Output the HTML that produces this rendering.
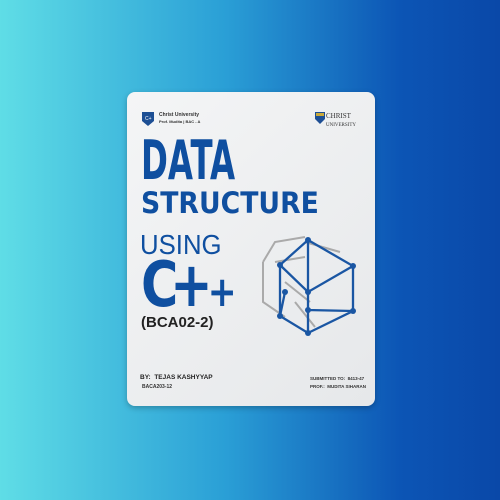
<!DOCTYPE html><html><head><style>
body{margin:0;width:500px;height:500px;overflow:hidden;background:linear-gradient(90deg,#5fdde6 0%,#2a9fd6 45%,#0c55b5 80%,#0a48a8 100%);font-family:"Liberation Sans",sans-serif;position:relative}
.card{position:absolute;left:127px;top:92px;width:248px;height:314px;background:linear-gradient(135deg,#f4f5f6,#e6e8ea);border-radius:8px;box-shadow:0 2px 6px rgba(0,0,0,.25)}
.t{position:absolute;color:#0f4fa0;font-weight:bold;white-space:nowrap}
</style></head><body>
<div class="card">
<svg style="position:absolute;left:15px;top:20px" width="12" height="14"><path d="M0 0H12V9L6 14L0 9Z" fill="#1d4f94"/><text x="3" y="8" font-size="5" fill="#fff">C+</text></svg>
<div class="t" style="left:32px;top:20px;font-size:5px;color:#333">Christ University</div>
<div class="t" style="left:32px;top:27px;font-size:4px;color:#333">Prof. Mudita | BAC - A</div>
<svg style="position:absolute;left:188px;top:20px" width="10" height="12"><path d="M0 0H10V7L5 12L0 7Z" fill="#1d4f94"/><rect x="1" y="1" width="8" height="3" fill="#c9a93a"/></svg>
<div class="t" style="left:199px;top:20px;font-size:7px;color:#333;font-family:'Liberation Serif',serif;font-weight:normal">CHRIST<br><span style="font-size:5px">UNIVERSITY</span></div>
<div class="t" style="left:14px;top:40px;font-size:54px;font-family:'DejaVu Sans',sans-serif;transform:scaleX(0.6);transform-origin:left;line-height:58px;height:58px">DATA</div>
<div class="t" style="left:14px;top:95px;font-size:29px;font-family:'DejaVu Sans',sans-serif;transform:scaleX(0.92);transform-origin:left;line-height:32px">STRUCTURE</div>
<div class="t" style="left:13px;top:137px;font-size:28px;font-weight:normal;letter-spacing:0;line-height:32px;transform:scaleX(0.92);transform-origin:left">USING</div>
<div class="t" style="left:14px;top:163px;font-size:62px;font-family:'DejaVu Sans',sans-serif;line-height:60px;transform:scaleX(0.82);transform-origin:left;letter-spacing:-10px">C+<span style="font-size:42px;letter-spacing:0;margin-left:4px">+</span></div>
<div class="t" style="left:14px;top:222px;font-size:15px;color:#222;line-height:18px">(BCA02-2)</div>
<svg style="position:absolute;left:128px;top:140px" width="110" height="110">
<g stroke="#aaa" stroke-width="2" fill="none"><path d="M50 10L85 20M8 30L20 10L50 5M8 30V70L30 85M50 25L20 30M40 70L60 95M30 50L55 70"/></g>
<g stroke="#1a56a3" stroke-width="2.3" fill="none"><path d="M53 8L98 34V79L53 101L25 84V33Z M53 8L53 60M25 33L53 60L98 34M53 60V78L98 79M53 78V101M25 84L30 60"/></g>
<g fill="#1a56a3"><circle cx="53" cy="8" r="3"/><circle cx="98" cy="34" r="3"/><circle cx="98" cy="79" r="3"/><circle cx="53" cy="101" r="3"/><circle cx="25" cy="84" r="3"/><circle cx="25" cy="33" r="3"/><circle cx="53" cy="60" r="3"/><circle cx="53" cy="78" r="3"/><circle cx="30" cy="60" r="3"/></g>
</svg>
<div class="t" style="left:13px;top:282px;font-size:6.5px;color:#222">BY:&nbsp; TEJAS KASHYYAP</div>
<div class="t" style="left:15px;top:292px;font-size:5px;color:#333">BACA203-12</div>
<div class="t" style="left:183px;top:284px;font-size:4.5px;color:#333">SUBMITTED TO:&nbsp; 8413-47</div>
<div class="t" style="left:183px;top:292px;font-size:4.5px;color:#333">PROF.:&nbsp; MUDITA SIHARAN</div>
</div>
</body></html>
